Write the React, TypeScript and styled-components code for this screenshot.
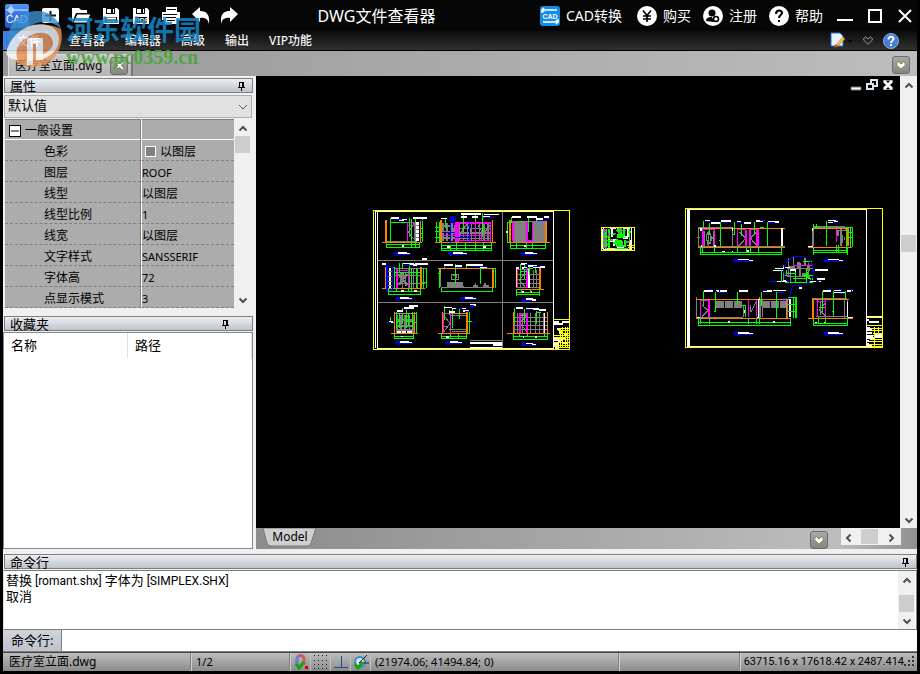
import React from "react";
import styled, { createGlobalStyle } from "styled-components";

const GlobalStyle = createGlobalStyle`
  * { box-sizing: border-box; }
  html, body { margin: 0; padding: 0; background: #000; }
  body, button, input, select, table {
    font-family: "Noto Sans", "Noto Sans CJK SC", sans-serif;
    font-size: 12px;
    color: #000;
  }
  button { border: 0; padding: 0; background: none; cursor: pointer; }
  svg { display: block; flex: none; }
`;

const Window = styled.div`
  display: flex;
  flex-direction: column;
  height: 100vh;
  padding: 0 3px 3px;
  background: #000;
  overflow: hidden;
`;

/* ---------- title bar ---------- */

const TitleBar = styled.header`
  display: flex;
  align-items: center;
  flex: none;
  height: 31px;
  padding: 1px 2px 0;
  background: #060606;
`;

const QuickTools = styled.div`
  display: flex;
  gap: 10px;
  margin-left: 12px;
`;

const IconButton = styled.button`
  display: grid;
  place-items: center;
  flex: none;
  height: 20px;
  width: ${(p: { $w?: number }) => p.$w ?? 20}px;
`;

const Title = styled.h1`
  flex: 1;
  margin: 0;
  padding-right: 28px;
  text-align: center;
  color: #fff;
  font-size: 16px;
  font-weight: 400;
  line-height: 24px;
  white-space: nowrap;
`;

const Services = styled.nav`
  display: flex;
  gap: 12px;
  margin-right: 12px;
`;

const ServiceLink = styled.a`
  display: flex;
  align-items: center;
  gap: 6px;
  color: #fff;
  font-size: 14px;
  line-height: 20px;
  text-decoration: none;
  white-space: nowrap;
  &:first-child { margin-right: 3px; }
`;

const WindowButtons = styled.div`
  display: flex;
  gap: 11px;
`;

/* ---------- menu ---------- */

const MenuBar = styled.nav`
  display: flex;
  align-items: center;
  flex: none;
  height: 20px;
  padding-right: 17px;
  border-bottom: 1px solid #000;
  background: linear-gradient(#0c0c0c, #303030);
`;

const FileMenu = styled.button`
  align-self: stretch;
  width: 52px;
  margin-right: 4px;
  color: #fff;
  font-weight: 500;
  background: linear-gradient(90deg, #3f83e6, #17396f 80%, #14233c);
`;

const MenuItem = styled.button`
  padding: 0 10px;
  color: #f2f2f2;
  font-weight: 500;
  line-height: 18px;
  white-space: nowrap;
`;

const Spacer = styled.div`
  flex: 1;
`;

/* ---------- document tabs ---------- */

const DocumentTabs = styled.div`
  display: flex;
  align-items: flex-end;
  flex: none;
  height: 25px;
  padding: 0 7px 0 5px;
  background: linear-gradient(90deg, #979797, #bdbdbd);
`;

const DocumentTab = styled.div`
  display: flex;
  align-items: center;
  gap: 8px;
  height: 22px;
  padding: 0 3px 0 6px;
  border: 1px solid #ddd;
  border-bottom: 0;
  border-right: 2px solid #777;
  background: linear-gradient(#c9c9c9, #b5b5b5);
`;

const SmallButton = styled.button`
  display: grid;
  place-items: center;
  flex: none;
  width: 18px;
  height: 18px;
  border: 1px solid #6d6d6d;
  border-radius: 3px;
  background: linear-gradient(#a9a9a9, #858585);
`;

const TabLabel = styled.span`
  line-height: 20px;
  white-space: nowrap;
`;

const TabMenuSlot = styled.div`
  padding-bottom: 2px;
`;

/* ---------- work area ---------- */

const WorkArea = styled.main`
  display: flex;
  flex: 1;
  min-height: 0;
  background: #f0f0f0;
`;

const Dock = styled.aside`
  display: flex;
  flex-direction: column;
  flex: none;
  width: 250px;
  margin-right: 3px;
  padding-top: 2px;
`;

const PanelHeader = styled.header`
  display: flex;
  align-items: center;
  justify-content: space-between;
  flex: none;
  height: 15px;
  margin: 0 0 0 1px;
  padding: 0 ${(p: { $end?: number }) => p.$end ?? 5}px 0 5px;
  border: 1px solid #7e7e80;
  background: linear-gradient(#eceef1, #bfc3cb);
`;

const PanelTitle = styled.h2`
  margin: 0;
  font-size: 13px;
  font-weight: 400;
  line-height: 12px;
`;

const PresetBox = styled.div`
  display: grid;
  flex: none;
  margin: 2px 1px 1px;
  > * { grid-area: 1 / 1; }
  > svg { justify-self: end; align-self: center; margin-right: 4px; pointer-events: none; }
`;

const PresetSelect = styled.select`
  appearance: none;
  height: 23px;
  padding: 0 3px 3px;
  border: 1px solid #adadad;
  border-radius: 0;
  background: #e1e1e1;
  font-size: 13px;
`;

const PropertyArea = styled.div`
  display: flex;
  flex: none;
  margin: 0 2px 8px;
`;

const PropertyTable = styled.table`
  flex: 1;
  border-spacing: 0;
  table-layout: fixed;
  background: #acacac;
`;

const PropertyName = styled.th`
  width: 136px;
  height: 21px;
  padding: 3px 0 0 39px;
  border-right: 1px solid #808080;
  border-bottom: 1px dashed #808080;
  font-weight: 400;
  line-height: 17px;
  text-align: left;
`;

const PropertyValue = styled.td`
  height: 21px;
  padding: 3px 0 0;
  border-left: 1px solid #fff;
  border-bottom: 1px dashed #808080;
  font-size: ${(p: { $latin?: boolean }) => (p.$latin ? 11 : 12)}px;
  line-height: 17px;
`;

const CategoryName = styled(PropertyName)`
  padding: 2px 0 0 4px;
  border-top: 1px solid #808080;
  border-bottom: 1px solid #fff;
`;

const CategoryValue = styled(PropertyValue)`
  padding: 0;
  border-top: 1px solid #808080;
  border-bottom: 1px solid #fff;
`;

const Inline = styled.span`
  display: flex;
  align-items: center;
  gap: 4px;
`;

const Collapse = styled.button`
  display: grid;
  place-items: center;
  width: 12px;
  height: 12px;
  border: 1px solid #000;
  background: #fff;
`;

const Swatch = styled.span`
  width: 11px;
  height: 11px;
  margin-left: 3px;
  border: 1px solid #fff;
  background: #808080;
`;

const Favorites = styled.div`
  flex: 1;
  margin-top: 1px;
  border: 1px solid #828790;
  background: #fff;
`;

const FavoritesTable = styled.table`
  width: 100%;
  border-spacing: 0;
  table-layout: fixed;
`;

const FavoritesHead = styled.th`
  height: 25px;
  padding: 0 7px 2px;
  border-right: 1px solid #e0e0e0;
  font-size: 13px;
  font-weight: 400;
  text-align: left;
`;

/* ---------- scroll bars ---------- */

const VScroll = styled.div`
  display: flex;
  flex-direction: column;
  align-items: center;
  flex: none;
  width: 17px;
  padding: 5px 0;
  background: #f0f0f0;
`;

const VThumb = styled.div`
  width: 15px;
  height: ${(p: { $h: number }) => p.$h}px;
  background: #cdcdcd;
`;

const Grow = styled.div`
  flex: ${(p: { $n: number }) => p.$n};
`;

const ArrowButton = styled.button`
  display: grid;
  place-items: center;
  width: 15px;
  height: 8px;
`;

const HScroll = styled.div`
  display: flex;
  align-items: center;
  justify-content: space-between;
  width: 60px;
  height: 17px;
  margin-left: 13px;
  padding-right: 3px;
  background: #f0f0f0;
`;

const HThumb = styled.div`
  width: 17px;
  height: 15px;
  background: #cdcdcd;
`;

/* ---------- drawing view ---------- */

const ViewColumn = styled.section`
  display: flex;
  flex-direction: column;
  flex: 1;
  min-width: 0;
`;

const ViewRow = styled.div`
  display: flex;
  flex: 1;
  min-height: 0;
`;

const Canvas = styled.div`
  position: relative;
  flex: 1;
  min-width: 0;
  overflow: hidden;
  background: #000;
`;

const ChildButtons = styled.div`
  position: absolute;
  top: -1px;
  right: 6px;
  display: flex;
  gap: 4px;
`;

const ModelBar = styled.div`
  display: flex;
  align-items: flex-start;
  flex: none;
  height: 21px;
  padding-right: 16px;
  background: linear-gradient(90deg, #8c8c8c, #bdbdbd 88%, #909090);
`;

const ModelTab = styled.button`
  display: grid;
  height: 19px;
  margin-left: 7px;
  > * { grid-area: 1 / 1; }
`;

const ModelLabel = styled.span`
  align-self: start;
  line-height: 17px;
`;

const ModelMenu = styled(SmallButton)`
  margin-top: 3px;
`;

/* ---------- command line ---------- */

const CommandPanel = styled.section`
  flex: none;
  padding-top: 5px;
  background: #f0f0f0;
`;

const CommandLog = styled.div`
  display: flex;
  height: 60px;
  margin-top: 1px;
  padding-right: 1px;
  border: 1px solid #7c7e80;
  border-left-color: #ddd;
  background: #fff;
`;

const LogText = styled.div`
  flex: 1;
  padding: 2px;
  font-family: Roboto, "Noto Sans CJK SC", sans-serif;
  font-size: 12px;
  line-height: 15px;
`;

const Cjk = styled.span`
  font-size: 13px;
`;

const CommandRow = styled.div`
  display: flex;
  height: 22px;
  border-bottom: 1px solid #7c7e80;
`;

const CommandLabel = styled.label`
  width: 59px;
  padding-left: 8px;
  border-right: 1px solid #7c7e80;
  background: linear-gradient(#d0d3da, #bfc3cc);
  font-size: 13px;
  line-height: 20px;
`;

const CommandInput = styled.input`
  flex: 1;
  min-width: 0;
  border: 0;
  outline: 0;
  padding: 0 4px;
  background: #fff;
`;

/* ---------- status bar ---------- */

const StatusBar = styled.footer`
  display: flex;
  flex: none;
  height: 19px;
  border-top: 1px solid #444;
  background: linear-gradient(#bdbdbd, #8b8b8b);
`;

const StatusCell = styled.div`
  display: flex;
  align-items: center;
  flex: ${(p: { $w?: number }) => (p.$w ? `0 0 ${p.$w}px` : "1")};
  padding: 0 0 2px 4px;
  border-right: 1px solid #d0d0d0;
  box-shadow: inset -1px 0 #808080;
  font-size: 11px;
  white-space: nowrap;
`;

const StatusFile = styled.span`
  padding-left: 2px;
  font-size: 12px;
`;

const StatusToggle = styled.button`
  display: grid;
  place-items: center;
  flex: 0 0 20px;
  border-right: 1px solid #c2c2c2;
`;

const Extents = styled.div`
  display: flex;
  align-items: center;
  flex: 0 0 174px;
  justify-content: space-between;
  padding: 0 3px 2px;
  font-family: Roboto, sans-serif;
  font-size: 11px;
  white-space: nowrap;
`;

/* ---------- site mark over the window corner ---------- */

const SiteMark = styled.div`
  position: absolute;
  top: 10px;
  left: 4px;
  display: flex;
  gap: 3px;
  pointer-events: none;
`;

const SiteWords = styled.div`
  display: flex;
  flex-direction: column;
`;

const SiteName = styled.span`
  color: #1688c9;
  opacity: 0.85;
  font-family: "Noto Sans CJK SC", sans-serif;
  font-size: 27px;
  font-weight: 700;
  line-height: 38px;
  white-space: nowrap;
`;

const SiteUrl = styled.span`
  color: #43a832;
  opacity: 0.85;
  font-family: "Liberation Serif", serif;
  font-size: 20px;
  font-weight: 700;
  line-height: 18px;
  white-space: nowrap;
`;

/* ---------- icons ---------- */

const Chevron = ({ turn = 0, color = "#505050" }: { turn?: number; color?: string }) => (
  <svg width="10" height="10" viewBox="0 0 10 10">
    <path d="M1.5 6.5 5 3l3.5 3.5" fill="none" stroke={color} strokeWidth="2" transform={`rotate(${turn} 5 5)`} />
  </svg>
);

const HeartDown = ({ fill = "#fff", stroke = "#8a7d36" }: { fill?: string; stroke?: string }) => (
  <svg width="10" height="9" viewBox="0 0 10 9">
    <path d="M.7 2.5 2.5.8 5 3 7.5.8l1.8 1.7v1.7L5 8.2.7 4.2z" fill={fill} stroke={stroke} />
  </svg>
);

const Pin = () => (
  <svg width="9" height="10" viewBox="0 0 9 10" shapeRendering="crispEdges">
    <path d="M2.5 6V1.5h4V6M5.5 1v5M1 6.5h7M4.5 7v3" fill="none" stroke="#000" />
  </svg>
);

const AppLogo = () => (
  <svg width="24" height="24" viewBox="0 0 24 24">
    <defs>
      <linearGradient id="logoBlue" x2="0" y2="1">
        <stop stopColor="#4d95f4" />
        <stop offset="1" stopColor="#1b55c8" />
      </linearGradient>
    </defs>
    <rect width="24" height="24" rx="2" fill="url(#logoBlue)" />
    <path d="M6 1v10M1 6h22M4 4h4v4H4z" fill="none" stroke="#dceaff" />
    <text x="1" y="19" fontSize="10" fontFamily="Liberation Sans, sans-serif" fill="#fff">CAD</text>
  </svg>
);

const NewIcon = () => (
  <svg width="20" height="20" viewBox="0 0 20 20">
    <rect x="1" y="2" width="17" height="15" rx="2" fill="#fff" />
    <path d="M9.500 5v10M4 9.500h11" stroke="#111" strokeWidth="2" />
  </svg>
);

const OpenIcon = () => (
  <svg width="20" height="20" viewBox="0 0 20 20">
    <path d="M1 17V2h7l2 2h6v3H5z" fill="#fff" />
    <path d="M6 8h14l-4 9H2z" fill="#fff" stroke="#060606" />
  </svg>
);

const SaveIcon = ({ pdf }: { pdf?: boolean }) => (
  <svg width="20" height="20" viewBox="0 0 20 20">
    <path d="M2 2h14l2 2v14H2z" fill="#fff" />
    <path d="M5 2h9v6H5z" fill="#060606" />
    <path d="M6 3h7v4H6z" fill="#fff" />
    <path d="M11 3v4" stroke="#060606" strokeWidth="2" />
    <path d="M4 11h12v6H4z" fill="#060606" />
    {pdf ? (
      <text x="4" y="17" fontSize="7" fontWeight="700" fontFamily="Liberation Sans, sans-serif" fill="#fff">PDF</text>
    ) : (
      <path d="M5 12.500h10M5 15.500h10" stroke="#fff" strokeWidth="2" />
    )}
  </svg>
);

const PrintIcon = () => (
  <svg width="20" height="20" viewBox="0 0 20 20">
    <path d="M5 1h11v5H5zM1 6h18v8H1zM4 11h12v7H4z" fill="#fff" />
    <path d="M6 3.500h9M2 8.500h14M5 11.500h10M6 14.500h8" stroke="#060606" />
  </svg>
);

const UndoIcon = () => (
  <svg width="20" height="20" viewBox="0 0 20 20">
    <path d="M1 8 9 1v4c7 0 10 4 9 13-1-5-4-7-9-6v4z" fill="#fff" />
  </svg>
);

const RedoIcon = () => (
  <svg width="20" height="20" viewBox="0 0 20 20">
    <path d="M17 8 9 1v4C2 5-1 9 0 18c1-5 4-7 9-6v4z" fill="#fff" />
  </svg>
);

const ConvertIcon = () => (
  <svg width="20" height="20" viewBox="0 0 20 20">
    <rect width="20" height="20" rx="3" fill="#168be8" />
    <path d="M2 7V4h15M4 2 2 4l2 2M18 13v3H3M16 14l2 2-2 2" fill="none" stroke="#fff" strokeWidth="1.500" />
    <text x="10" y="13" textAnchor="middle" fontSize="7" fontWeight="700" fontFamily="Liberation Sans, sans-serif" fill="#fff">CAD</text>
  </svg>
);

const YenIcon = () => (
  <svg width="20" height="20" viewBox="0 0 20 20">
    <circle cx="10" cy="10" r="10" fill="#fff" />
    <path d="M6 4.500 10 9.500 14 4.500M10 9v7M6 10h8M6 13h8" fill="none" stroke="#000" strokeWidth="1.700" />
  </svg>
);

const UserIcon = () => (
  <svg width="20" height="20" viewBox="0 0 20 20">
    <circle cx="10" cy="10" r="10" fill="#fff" />
    <circle cx="9" cy="7" r="3.500" fill="#000" />
    <path d="M3 15c0-3 2-4 6-4l2 5z" fill="#000" />
    <circle cx="13" cy="13" r="2.500" fill="#fff" stroke="#000" strokeWidth="1.500" />
  </svg>
);

const HelpIcon = () => (
  <svg width="20" height="20" viewBox="0 0 20 20">
    <circle cx="10" cy="10" r="10" fill="#fff" />
    <path d="M7 8c0-5 6-4 6-1 0 2-3 2-3 5" fill="none" stroke="#000" strokeWidth="2" />
    <path d="M9 14h2v2H9z" />
  </svg>
);

const BlueHelpIcon = () => (
  <svg width="16" height="16" viewBox="0 0 16 16">
    <circle cx="8" cy="8" r="7.500" fill="#467fd0" stroke="#86aee6" />
    <path d="M5.500 6.500c0-4 5-3 5-.5 0 2-2.500 1.500-2.500 4M8 11v2" fill="none" stroke="#fff" strokeWidth="2" />
  </svg>
);

const PaletteIcon = () => (
  <svg width="24" height="17" viewBox="0 0 24 17">
    <path d="M1 1h9l3 3v10H1z" fill="#e8f1ff" stroke="#2868d0" />
    <path d="M5 14 13 5l2 2-8 8z" fill="#f4ca31" stroke="#8a6a14" strokeWidth=".5" />
    <path d="m4 16 2-4 2 2z" fill="#d33" />
    <path d="M17 8h6l-3 3z" fill="#080808" />
  </svg>
);

const CloseTabIcon = () => (
  <svg width="9" height="9" viewBox="0 0 9 9">
    <path d="m1 1 7 7M8 1 1 8" stroke="#6f7a32" strokeWidth="3.500" />
    <path d="m1 1 7 7M8 1 1 8" stroke="#fff" strokeWidth="1.800" />
  </svg>
);

const SiteLogo = () => (
  <svg width="59" height="60" viewBox="0 0 59 60">
    <g opacity=".8">
      <path d="M5 36C0 17 15 1 33 1c12 0 21 7 24 18C46 9 32 11 24 18 16 24 12 31 5 36z" fill="#3c8fd0" />
      <path d="M57 19c4 20-9 38-28 38C16 57 7 50 5 40c8-4 13-12 20-18 10-8 22-9 32-3z" fill="#ee9455" />
      <path d="M2 43C5 29 16 18 29 15c15-3 26 3 26 14 0 10-7 17-17 20l1-5c8-3 12-9 9-15-4-8-16-8-26-1C14 33 10 41 14 50 8 50 4 48 2 43z" fill="#f8fafb" />
      <path d="M23 28h16v22h-7V34h-3v21h-6z" fill="#fff" />
    </g>
  </svg>
);

/* ---------- CAD drawing ---------- */

const G = "#00ff00";
const W = "#ffffff";
const M = "#ff00ff";
const O = "#ff8000";
const B = "#0000ff";
const Y = "#ffff00";
const K = "#808080";

type Layer = [color: string, width: number, path: string];

const Layers = ({ items }: { items: Layer[] }) => (
  <>
    {items.map(([color, width, path], i) => (
      <path key={i} d={path} stroke={color} strokeWidth={width} fill="none" />
    ))}
  </>
);

/* A numbered view bubble with its title line. */
const Captions = ({ at }: { at: [number, number, number][] }) => (
  <>
    {at.map(([x, y, len]) => (
      <g key={`${x}-${y}`}>
        <circle cx={x} cy={y} r="5" fill="none" stroke={B} strokeWidth="3" />
        <path d={`M${x - 9} ${y}h18`} stroke={B} strokeWidth="3" />
        <path d={`M${x + 6} ${y - 3}h${len - 12}`} stroke={W} strokeWidth="5" />
        <path d={`M${x + 6} ${y + 2}h${len}`} stroke={B} strokeWidth="3" />
        <path d={`M${x + len - 8} ${y}h12`} stroke={W} strokeWidth="4" />
      </g>
    ))}
  </>
);

const sheetOne: Layer[] = [
  [K, 3, "M23 166H550M23 293H550M397 20V430M300 406H397"],
  [W, 3, "M16 20H551V430H23V20M16 20V430"],
  [W, 5, "M300 414H397M370 420H397M300 427H397"],
  [Y, 4, "M10 16H598V433H10ZM551 343H598"],
  // row one, left room
  [K, 3, "M50 108H142M115 82L134 52M115 82L134 105M118 62V95M124 70V90M48 118H147"],
  [M, 4, "M113 51V108M134 51V108M111 52H136M113 61H136"],
  [O, 5, "M48 45V112M151 45V112"],
  [O, 3, "M36 112H155"],
  [W, 7, "M142 50V108"],
  [K, 3, "M139 60H146M139 72H146M139 84H146M139 96H146"],
  [G, 3, "M61 40V82M117 40V70M125 42V125M136 42V125M156 42V110M49 112V130M147 112V130M49 118H147M49 127H147M59 52H112M62 80V112M150 70H159M150 84H159M150 97H159"],
  [W, 6, "M63 40H87M86 45H112M130 40H171M97 124H101"],
  [B, 3, "M79 43H96M103 45H110M150 46H162"],
  // row one, middle room
  [K, 5, "M218 54V108M230 54V108M245 54V108M252 60V88M218 62H255M218 80H255M218 98H255"],
  [K, 4, "M268 58V105M280 54V106M292 54V106M304 54V106M328 54V106M342 54V106M354 54V106M262 70H362M262 84H362M262 100H362M270 88L290 58L308 88M325 60L340 88L360 60"],
  [M, 4, "M258 52V112M264 52V112M317 52V112M362 52V112M217 91H362M258 54H362M258 107H362M335 88V108"],
  [O, 5, "M213 45V112M367 45V112"],
  [O, 3, "M196 112H377"],
  [G, 3, "M199 52V110M207 52V110M196 66H210M196 80H210M196 96H210M213 112V138M365 112V138M213 122H365M213 129H365M213 136H365M258 112V138M317 112V138M337 25V95M315 30V52M225 38V70M279 30V80M240 112V138M340 112V138M285 112V138"],
  [B, 4, "M242 42V120M251 36V70M217 82H255M255 97H300M298 45V110"],
  [W, 5, "M212 40H232M272 26H334M342 28H388M306 35H325M340 34H360M272 36H292M232 126H240M339 126H347"],
  [B, 3, "M232 42H259M340 36H372"],
  // row one, right room
  [K, 38, "M449 51V110"],
  [K, 37, "M507 51V110"],
  [K, 3, "M425 48H525"],
  [M, 5, "M429 50V108M470 50V110M487 50V110M468 107H488"],
  [O, 6, "M420 45V112"],
  [O, 5, "M527 48V112"],
  [O, 3, "M412 112H540"],
  [G, 3, "M424 36V54M475 36V82M412 52V113M420 112V131M525 112V131M412 52H424M420 122H525M420 129H525M440 112V131M468 112V131M488 112V131M498 42V52M450 49H462"],
  [W, 5, "M425 36H453M470 36H502M498 42H520M522 36H536M410 79V84M462 122H467"],
  [B, 3, "M500 46H530M525 41H537"],
  // row two, left room
  [K, 3, "M80 196V248M90 204V240M98 200V250M106 204V244M118 190V250M130 190V250M142 190V250M45 250H155M72 190H168M72 210H155M80 235H165"],
  [K, 7, "M85 208L112 240M112 208L85 240M97 200V232"],
  [M, 4, "M81 193V250M116 193V250M79 196H118M70 186V190"],
  [O, 5, "M47 185V250M153 185V250"],
  [O, 3, "M36 250H165"],
  [W, 8, "M60 188V250"],
  [K, 3, "M54 200H66M54 214H66M54 228H66M54 240H66"],
  [B, 4, "M51 185H68V255H51ZM42 178L54 190M130 178V190"],
  [G, 3, "M72 186V252M88 175V205M97 175V192M117 178V200M138 190V250M160 190V250M169 190V250M55 250V270M152 250V270M80 250V262M115 250V262M55 259H152M55 267H152M72 202H155M125 190V262M157 232H170"],
  [W, 5, "M37 176H47M98 175H132M120 180H145M135 177H174M155 162H170M94 258H102M132 258H140"],
  [B, 3, "M100 180H130M140 182H155"],
  // row two, middle room
  [K, 4, "M244 208H266V224H244ZM250 212H260V220M232 234H280M230 244H282M234 234V248M278 234V248M256 224V248M214 248H366M316 235V248M345 235V248M212 210V245"],
  [K, 7, "M238 240H276M310 244H325M340 244H357"],
  [O, 3, "M212 188V212M205 190H372"],
  [O, 6, "M369 188V250"],
  [G, 3, "M256 178V236M331 185V238M207 190V250M376 190V250M213 250V262M368 250V262M213 259H368M222 178V188M205 205H212M268 180V188M290 180V188M366 190H378"],
  [W, 5, "M221 180H250M256 182H275M288 180H340M330 187H352"],
  [B, 3, "M222 184H228M262 186H272M310 183H342"],
  // row two, right room
  [K, 3, "M440 195V250M452 195V250M478 195V250M490 195V250M500 195V250M510 195V250M440 208H510M440 222H510M440 236H510M440 248H510M448 225L465 205M448 225L467 248"],
  [M, 4, "M443 190V250M471 192V250M442 193H472"],
  [Y, 3, "M439 192V245"],
  [W, 4, "M477 192V250"],
  [O, 4, "M510 190V252"],
  [O, 3, "M437 253H523"],
  [G, 3, "M452 178V225M463 178V222M478 186V210M440 252V272M508 252V272M440 261H508M440 268H508M453 200H470M471 190H490M455 252V262M480 252V262M497 190V205"],
  [W, 5, "M438 188H447M454 176H470M474 182H500M490 186H525M455 188H470M457 261H462M483 261H487"],
  [B, 3, "M465 178H482M488 184H510M462 190H472"],
  // row three, left room
  [K, 5, "M80 330V385M93 330V385M104 330V385M118 330V385M128 330V385M78 375H130M78 362H128M78 345H128"],
  [W, 6, "M80 381H93M96 381H108M112 381H125"],
  [O, 5, "M73 322V384M133 322V384"],
  [O, 3, "M73 324H135M63 385H145"],
  [G, 3, "M97 308V356M109 308V368M80 322V372M88 325V370M128 322V372M140 322V386M73 386V400M131 386V400M73 395H131M73 399H131M78 349H92M85 365H100M116 325V364M55 352H72M133 325H142M133 352H142M60 335V355M105 334H120M110 350H128"],
  [W, 5, "M116 303H143M103 309H132M82 317H100M58 351H68M92 394H99"],
  [B, 3, "M50 352H62M103 312H116M82 321H98"],
  // row three, middle room
  [K, 3, "M222 332L240 355L222 380M222 365H232M246 374H290M246 380H290M246 386H290M243 330H290"],
  [M, 4, "M220 324V386M242 324V398M220 326H245"],
  [O, 5, "M217 322V386M291 322V386"],
  [O, 3, "M204 385H300M245 326H292"],
  [G, 3, "M222 303V345M237 316V330M247 308V368M267 310V342M298 320V385M215 386V402M290 386V402M215 394H290M215 400H290M242 386V402M265 386V402M294 350H305M238 372H250"],
  [W, 5, "M222 307H246M246 310H288M280 317H298M300 300H318M238 320H255M229 395H236"],
  [B, 4, "M258 310H275M284 319H297M300 303H312M305 353H315"],
  // row three, right room
  [K, 3, "M432 325V385M442 325V385M456 325V385M482 325V385M495 325V385M508 325V385M520 325V385M432 338H532M432 350H532M432 362H532M432 374H532M450 352L468 335M450 352L468 378"],
  [M, 4, "M450 325V385M471 325V385M450 327H473"],
  [W, 4, "M523 325V385"],
  [O, 4, "M431 322V385M532 322V385"],
  [O, 3, "M412 385H541"],
  [G, 3, "M433 310V356M463 312V356M498 318V356M431 386V405M532 386V405M431 394H532M431 403H532M449 386V396M472 386V396M522 386V396M452 330H468M498 323H513"],
  [W, 5, "M438 309H460M468 311H506M508 315H528M458 395H462M495 395H500"],
  [B, 3, "M467 314H490M500 318H510"],
  // title block
  [W, 6, "M552 352H567M577 352H596M553 357H578M560 372H570M552 398H569M552 406H575M552 416H567M553 424H568M566 382H580M556 430H566"],
  [Y, 3, "M565 370H598M553 390H598M553 397H598M553 404H598M553 421H598M565 377H598M568 384H598M553 411H598M570 370V425M578 365V430M586 365V430M592 365V430M560 428H598"],
  [W, 4, "M573 400H585M580 415H590M563 410H573M583 388H592"],
];

const sheetTwo: Layer[] = [
  [W, 3, "M21 14H560V424H22M21 14V424"],
  [W, 5, "M27 16V424"],
  [Y, 4, "M16 10H608V428H16Z"],
  // upper long room
  [K, 4, "M55 65V128M58 67H158M72 78V125M100 78V125M158 68V125M78 95L85 80L97 100L85 120L78 95M176 80L197 100L176 122M212 100L230 80M212 100L230 122M52 97H60M58 124H315M85 78V120M92 85V118"],
  [M, 4, "M67 72V124M103 72V124M67 73H103M173 72V124M197 72V124M173 74H197M210 72V124M234 72V124M210 74H234M70 78V124M200 74V124M231 74V124"],
  [O, 3, "M55 70H315M55 127H315M62 65V70M158 67V73"],
  [W, 5, "M62 68V78M62 122H66M157 70V78M305 70V124M101 122H109"],
  [G, 3, "M70 47V72M88 54V90M121 50V122M163 50V88M184 56V94M224 50V90M262 50V124M61 126V150M305 126V150M61 142H305M61 149H305M66 126V142M103 126V142M173 126V142M198 126V142M210 126V142M234 126V142M240 67H252M118 106H124M157 88H165"],
  [W, 5, "M75 48H90M94 54H120M123 48H152M170 51H184M192 54H213M228 48H250M265 50H297M126 139H134M155 139H160M202 138H206"],
  [B, 3, "M75 50H94M125 53H145M172 53H190M240 47H255M265 52H285M180 145H183"],
  // upper right room
  [K, 6, "M399 68V124M475 75V92M484 70V124M399 67H496"],
  [K, 4, "M470 76H502M494 96V104M488 90V115"],
  [M, 4, "M469 68V112M498 68V76"],
  [O, 6, "M504 68V124"],
  [O, 3, "M400 70H508M384 127H515"],
  [W, 4, "M384 124H398M397 70V78"],
  [G, 3, "M399 66H416M401 56V66M408 56V66M439 48V124M511 66V126M517 66V126M400 128V150M502 128V150M400 137H502M400 143H502M470 120V145M475 120V145M500 68V145M495 66H518M505 82H518M505 98H518"],
  [W, 5, "M444 46H465M444 52H470M462 47H473"],
  [B, 3, "M458 53H472M468 47H474"],
  // detail bubble
  [K, 4, "M325 160V210M340 155V185M375 155V180M320 190H400M320 215H390M332 188V230M360 175V212M385 175V215M310 180V228"],
  [K, 8, "M355 170V192M385 180V198M325 188H345M365 208H380"],
  [M, 3, "M338 182H395M312 211H330"],
  [W, 4, "M310 188H330M346 192V215M330 195H346M310 228H322M388 230H424M278 196H312M285 190H312M275 229H312"],
  [G, 3, "M305 196V230M318 196V212M345 200V235M378 190V230M315 232H400M320 205H345M365 212H400M383 200V215M312 212H322M340 220H380M370 170H395"],
  [G, 6, "M372 212L398 224"],
  [B, 3, "M268 229H290M395 195H408M408 228H418M338 242L325 285M308 280H325V287H310Z"],
  [W, 5, "M410 222H435M413 195H445M406 195H438M356 248H366"],
  // lower long room
  [K, 20, "M107 299H132M135 299H159M162 299H186M246 299H270M273 299H298M301 299H324"],
  [K, 3, "M49 277V342M58 336H190M66 300L84 316L66 334M212 300V322L228 290M190 300V335M246 285V336"],
  [M, 4, "M62 284V335M87 284V335M62 287H87M205 284V335M229 284V335M205 284H229"],
  [O, 3, "M48 283H330M48 340H330M237 277V283M318 280V340"],
  [W, 5, "M236 283V335M195 315V325M52 337H60M231 337H238M330 283V335"],
  [K, 4, "M240 285V338M323 285V338"],
  [G, 3, "M70 258V302M106 262V318M172 262V296M244 260V302M289 260V340M55 340V362M330 340V362M55 352H330M55 361H330M62 340V356M88 340V356M205 340V356M230 340V356M237 340V356M155 282H165M186 300H196V335M101 319H107M340 278V340M347 278V340M350 278V340M325 278H350M325 298H350M325 318H350"],
  [W, 5, "M72 258H98M110 258H140M107 256H120M177 258H203M250 258H275M279 256H318M143 351H151M278 351H286"],
  [B, 3, "M85 254H96M118 254V262H132M248 255H262M292 261H312M316 280H324"],
  // lower right room
  [K, 5, "M399 278V338M502 282V338M400 280H500"],
  [K, 3, "M419 315L435 295M419 315L437 334M420 290V330M436 290V330M492 283V338M408 335H500"],
  [M, 4, "M412 284V335M437 284V335M412 284H437M412 290H437"],
  [O, 5, "M399 278V340"],
  [O, 3, "M395 283H506M384 340H518"],
  [W, 5, "M502 292V335M505 337H519"],
  [G, 3, "M427 258V320M460 258V335M497 258V283M400 340V362M502 340V362M400 354H502M400 361H502M415 336V355M437 336V355M418 308H434M455 320H462"],
  [W, 5, "M428 258H452M461 262H494M500 258H518M404 352H412M432 352H436M462 256H484"],
  [B, 3, "M444 254H455M474 254H486M476 264H492M513 253V260H520"],
  // title block
  [W, 3, "M560 334H605"],
  [Y, 3, "M560 338H608M560 362H608M584 365V428M560 370H608M570 377H608M578 384H608M578 392H608M570 402H608M560 410H608M560 418H608M560 425H608M596 365V385"],
  [W, 6, "M561 346H567M568 350H596M562 368H571M562 376H575M562 384H575M562 392H578M562 400H582M562 408H568M562 416H568M562 422H575"],
  [W, 12, "M586 394H605"],
];

const detailSheet: Layer[] = [
  [W, 3, "M24 23H109V88H24ZM22 26V88"],
  [K, 12, "M30 28V85M76 24V50M60 70H84"],
  [K, 4, "M42 40H62M44 60H66M86 66H108"],
  [W, 7, "M50 26V52M58 56V72M98 28V52M88 52H100M105 60V88M54 74H60"],
  [G, 6, "M34 26V88M42 26V88M68 24V36M78 36V52M86 28V48M66 58V74M76 60V76M54 68H80M62 78H94M90 60V82M100 36H108"],
  [G, 12, "M66 47H88M60 66H80"],
  [G, 3, "M24 48H44M24 62H44M24 76H44M62 32H92M66 52H94M50 84H98M104 26V70M52 44H60"],
  [M, 4, "M32 28V36M40 40V48M32 54V62M38 70V76M28 82H36"],
  [W, 3, "M44 26H64M84 26H104M84 56H96M46 64H54M66 82H88"],
  [B, 3, "M72 22H76M88 22H92"],
  [Y, 3, "M19 21H118V91H19ZM36 86H60M40 58H46M95 76H118M98 82H118M104 76V92"],
];

const CadDrawing = () => (
  <svg width="644" height="452" viewBox="0 0 644 452" shapeRendering="crispEdges" role="img" aria-label="医疗室立面">
    <svg x="114" y="129" width="204" height="148" viewBox="0 0 612 444">
      <Layers items={sheetOne} />
      <circle cx="251" cy="41" r="6" fill="none" stroke={B} strokeWidth="3" />
      <Captions
        at={[
          [79, 146, 38], [242, 146, 44], [460, 146, 36],
          [84, 281, 38], [279, 281, 36], [461, 285, 34],
          [84, 413, 38], [233, 413, 38], [461, 418, 34],
        ]}
      />
    </svg>
    <svg x="339" y="144" width="46" height="36" viewBox="0 0 138 108">
      <Layers items={detailSheet} />
    </svg>
    <svg x="424" y="129" width="208" height="148" viewBox="0 0 624 444">
      <Layers items={sheetTwo} />
      <circle cx="356" cy="198" r="45" fill="none" stroke={B} strokeWidth="3" strokeDasharray="12 3" />
      <Captions at={[[168, 166, 46], [438, 166, 46], [168, 386, 46], [438, 386, 46]]} />
    </svg>
  </svg>
);

/* ---------- page ---------- */

const properties: { name: string; value: string; latin?: boolean; swatch?: boolean }[] = [
  { name: "色彩", value: "以图层", swatch: true },
  { name: "图层", value: "ROOF", latin: true },
  { name: "线型", value: "以图层" },
  { name: "线型比例", value: "1", latin: true },
  { name: "线宽", value: "以图层" },
  { name: "文字样式", value: "SANSSERIF", latin: true },
  { name: "字体高", value: "72", latin: true },
  { name: "点显示模式", value: "3", latin: true },
];

const quickTools = [
  { label: "新建", icon: <NewIcon /> },
  { label: "打开", icon: <OpenIcon /> },
  { label: "保存", icon: <SaveIcon /> },
  { label: "另存为PDF", icon: <SaveIcon pdf /> },
  { label: "打印", icon: <PrintIcon /> },
  { label: "撤销", icon: <UndoIcon /> },
  { label: "重做", icon: <RedoIcon /> },
];

const services = [
  { label: "CAD转换", icon: <ConvertIcon /> },
  { label: "购买", icon: <YenIcon /> },
  { label: "注册", icon: <UserIcon /> },
  { label: "帮助", icon: <HelpIcon /> },
];

const menus = ["查看器", "编辑器", "高级", "输出", "VIP功能"];

const VerticalScroll = ({ thumb, before, after }: { thumb: number; before: number; after: number }) => (
  <VScroll>
    <ArrowButton aria-label="向上滚动"><Chevron /></ArrowButton>
    <Grow $n={before} />
    <VThumb $h={thumb} />
    <Grow $n={after} />
    <ArrowButton aria-label="向下滚动"><Chevron turn={180} /></ArrowButton>
  </VScroll>
);

export default function App() {
  return (
    <>
      <GlobalStyle />
      <Window>
        <TitleBar>
          <AppLogo />
          <QuickTools>
            {quickTools.map((t) => (
              <IconButton key={t.label} aria-label={t.label}>{t.icon}</IconButton>
            ))}
          </QuickTools>
          <Title>DWG文件查看器</Title>
          <Services>
            {services.map((s) => (
              <ServiceLink key={s.label} href="#">{s.icon}{s.label}</ServiceLink>
            ))}
          </Services>
          <WindowButtons>
            <IconButton aria-label="最小化">
              <svg width="18" height="16" viewBox="0 0 18 16"><path d="M1 12h16" stroke="#fff" strokeWidth="2" /></svg>
            </IconButton>
            <IconButton aria-label="最大化" $w={18}>
              <svg width="14" height="14" viewBox="0 0 14 14"><path d="M1 1h12v12H1z" fill="none" stroke="#fff" strokeWidth="2" /></svg>
            </IconButton>
            <IconButton aria-label="关闭">
              <svg width="14" height="14" viewBox="0 0 14 14"><path d="m1 1 12 12M13 1 1 13" stroke="#fff" strokeWidth="2" /></svg>
            </IconButton>
          </WindowButtons>
        </TitleBar>

        <MenuBar>
          <FileMenu>文件</FileMenu>
          {menus.map((m) => <MenuItem key={m}>{m}</MenuItem>)}
          <Spacer />
          <IconButton aria-label="界面样式" $w={24}><PaletteIcon /></IconButton>
          <IconButton aria-label="更多" $w={28}><HeartDown fill="#222" stroke="#999" /></IconButton>
          <IconButton aria-label="帮助主题" $w={18}><BlueHelpIcon /></IconButton>
        </MenuBar>

        <DocumentTabs>
          <DocumentTab>
            <TabLabel>医疗室立面.dwg</TabLabel>
            <SmallButton aria-label="关闭文件"><CloseTabIcon /></SmallButton>
          </DocumentTab>
          <Spacer />
          <TabMenuSlot>
            <SmallButton aria-label="文件列表"><HeartDown /></SmallButton>
          </TabMenuSlot>
        </DocumentTabs>

        <WorkArea>
          <Dock>
            <PanelHeader $end={6}><PanelTitle>属性</PanelTitle><Pin /></PanelHeader>
            <PresetBox>
              <PresetSelect aria-label="属性预设"><option>默认值</option></PresetSelect>
              <svg width="10" height="6" viewBox="0 0 10 6"><path d="m1 1 4 4 4-4" fill="none" stroke="#555" /></svg>
            </PresetBox>
            <PropertyArea>
              <PropertyTable>
                <tbody>
                  <tr>
                    <CategoryName scope="row">
                      <Inline>
                        <Collapse aria-label="折叠">
                          <svg width="8" height="2" viewBox="0 0 8 2"><path d="M0 1h8" stroke="#000" /></svg>
                        </Collapse>
                        一般设置
                      </Inline>
                    </CategoryName>
                    <CategoryValue />
                  </tr>
                  {properties.map((p) => (
                    <tr key={p.name}>
                      <PropertyName scope="row">{p.name}</PropertyName>
                      <PropertyValue $latin={p.latin}>
                        {p.swatch ? <Inline><Swatch />{p.value}</Inline> : p.value}
                      </PropertyValue>
                    </tr>
                  ))}
                </tbody>
              </PropertyTable>
              <VerticalScroll thumb={17} before={4} after={140} />
            </PropertyArea>
            <PanelHeader $end={22}><PanelTitle>收藏夹</PanelTitle><Pin /></PanelHeader>
            <Favorites>
              <FavoritesTable>
                <thead>
                  <tr><FavoritesHead>名称</FavoritesHead><FavoritesHead>路径</FavoritesHead></tr>
                </thead>
              </FavoritesTable>
            </Favorites>
          </Dock>

          <ViewColumn>
            <ViewRow>
              <Canvas>
                <CadDrawing />
                <ChildButtons>
                  <IconButton aria-label="最小化图纸" $w={12}>
                    <svg width="12" height="12" viewBox="0 0 12 12"><path d="M1 8h10v3H1z" fill="#fff" stroke="#68727e" /></svg>
                  </IconButton>
                  <IconButton aria-label="还原图纸" $w={12}>
                    <svg width="12" height="12" viewBox="0 0 12 12"><path d="M5 4V1h6v6H8M1 5h6v5H1z" fill="none" stroke="#dce2ea" strokeWidth="2" /></svg>
                  </IconButton>
                  <IconButton aria-label="关闭图纸" $w={12}>
                    <svg width="12" height="12" viewBox="0 0 12 12">
                      <path d="M1 1.500h10M1 10.500h10" stroke="#7a8796" />
                      <path d="m2 2 8 8M10 2l-8 8" stroke="#fff" strokeWidth="3" />
                    </svg>
                  </IconButton>
                </ChildButtons>
              </Canvas>
              <VerticalScroll thumb={17} before={144} after={260} />
            </ViewRow>
            <ModelBar>
              <ModelTab>
                <svg width="54" height="19" viewBox="0 0 54 19">
                  <path d="M0 0 4 15q1 3 4 3h36q3 0 4-3L53 0z" fill="#cfcfcf" stroke="#777" />
                </svg>
                <ModelLabel>Model</ModelLabel>
              </ModelTab>
              <Spacer />
              <ModelMenu aria-label="布局列表"><HeartDown /></ModelMenu>
              <HScroll>
                <ArrowButton aria-label="向左滚动"><Chevron turn={-90} /></ArrowButton>
                <HThumb />
                <ArrowButton aria-label="向右滚动"><Chevron turn={90} /></ArrowButton>
              </HScroll>
            </ModelBar>
          </ViewColumn>
        </WorkArea>

        <CommandPanel>
          <PanelHeader $end={6}><PanelTitle>命令行</PanelTitle><Pin /></PanelHeader>
          <CommandLog>
            <LogText>
              <Cjk>替换</Cjk> [romant.shx] <Cjk>字体为</Cjk> [SIMPLEX.SHX]<br />
              <Cjk>取消</Cjk>
            </LogText>
            <VerticalScroll thumb={17} before={12} after={4} />
          </CommandLog>
          <CommandRow>
            <CommandLabel htmlFor="command">命令行:</CommandLabel>
            <CommandInput id="command" />
          </CommandRow>
        </CommandPanel>

        <StatusBar>
          <StatusCell $w={189}><StatusFile>医疗室立面.dwg</StatusFile></StatusCell>
          <StatusCell $w={99}>1/2</StatusCell>
          <StatusToggle aria-label="对象捕捉">
            <svg width="16" height="16" viewBox="0 0 16 16">
              <path d="M4 12V5a3.500 3.500 0 0 1 7 0v6" fill="none" stroke="#d35a5a" strokeWidth="3" />
              <path d="M4 11V5a3.500 3.500 0 0 1 2-3" fill="none" stroke="#5a8bd3" strokeWidth="3" />
              <path d="m3 10 3 4 5-6" fill="none" stroke="#16a016" strokeWidth="3" />
              <path d="M12 12h3v3h-3z" fill="#d00" />
            </svg>
          </StatusToggle>
          <StatusToggle aria-label="栅格">
            <svg width="16" height="16" viewBox="0 0 16 16" shapeRendering="crispEdges">
              <path d="M1 1.500h15M1 6.500h15M1 10.500h15M1 14.500h15" stroke="#222" strokeWidth="1" strokeDasharray="1 3" />
            </svg>
          </StatusToggle>
          <StatusToggle aria-label="正交">
            <svg width="14" height="14" viewBox="0 0 14 14"><path d="M7.500 1v11M0 12.500h14" stroke="#1c4f94" /></svg>
          </StatusToggle>
          <StatusToggle aria-label="极轴追踪">
            <svg width="16" height="16" viewBox="0 0 16 16">
              <circle cx="7" cy="8" r="5" fill="#cfe4f8" stroke="#3f86c8" strokeWidth="2" />
              <path d="M6 9 14 1M6 9h10" stroke="#222" />
              <path d="m2 10 3 4 5-6" fill="none" stroke="#16a016" strokeWidth="3" />
            </svg>
          </StatusToggle>
          <StatusCell>(21974.06; 41494.84; 0)</StatusCell>
          <StatusCell $w={121} />
          <Extents>
            63715.16 x 17618.42 x 2487.414
            <svg width="10" height="10" viewBox="0 0 10 10">
              <path d="M8 0h2v2H8zM4 4h2v2H4zM8 4h2v2H8zM0 8h2v2H0zM4 8h2v2H4zM8 8h2v2H8z" fill="#333" />
            </svg>
          </Extents>
        </StatusBar>
      </Window>
      <SiteMark>
        <SiteLogo />
        <SiteWords>
          <SiteName>河东软件园</SiteName>
          <SiteUrl>www.pc0359.cn</SiteUrl>
        </SiteWords>
      </SiteMark>
    </>
  );
}
